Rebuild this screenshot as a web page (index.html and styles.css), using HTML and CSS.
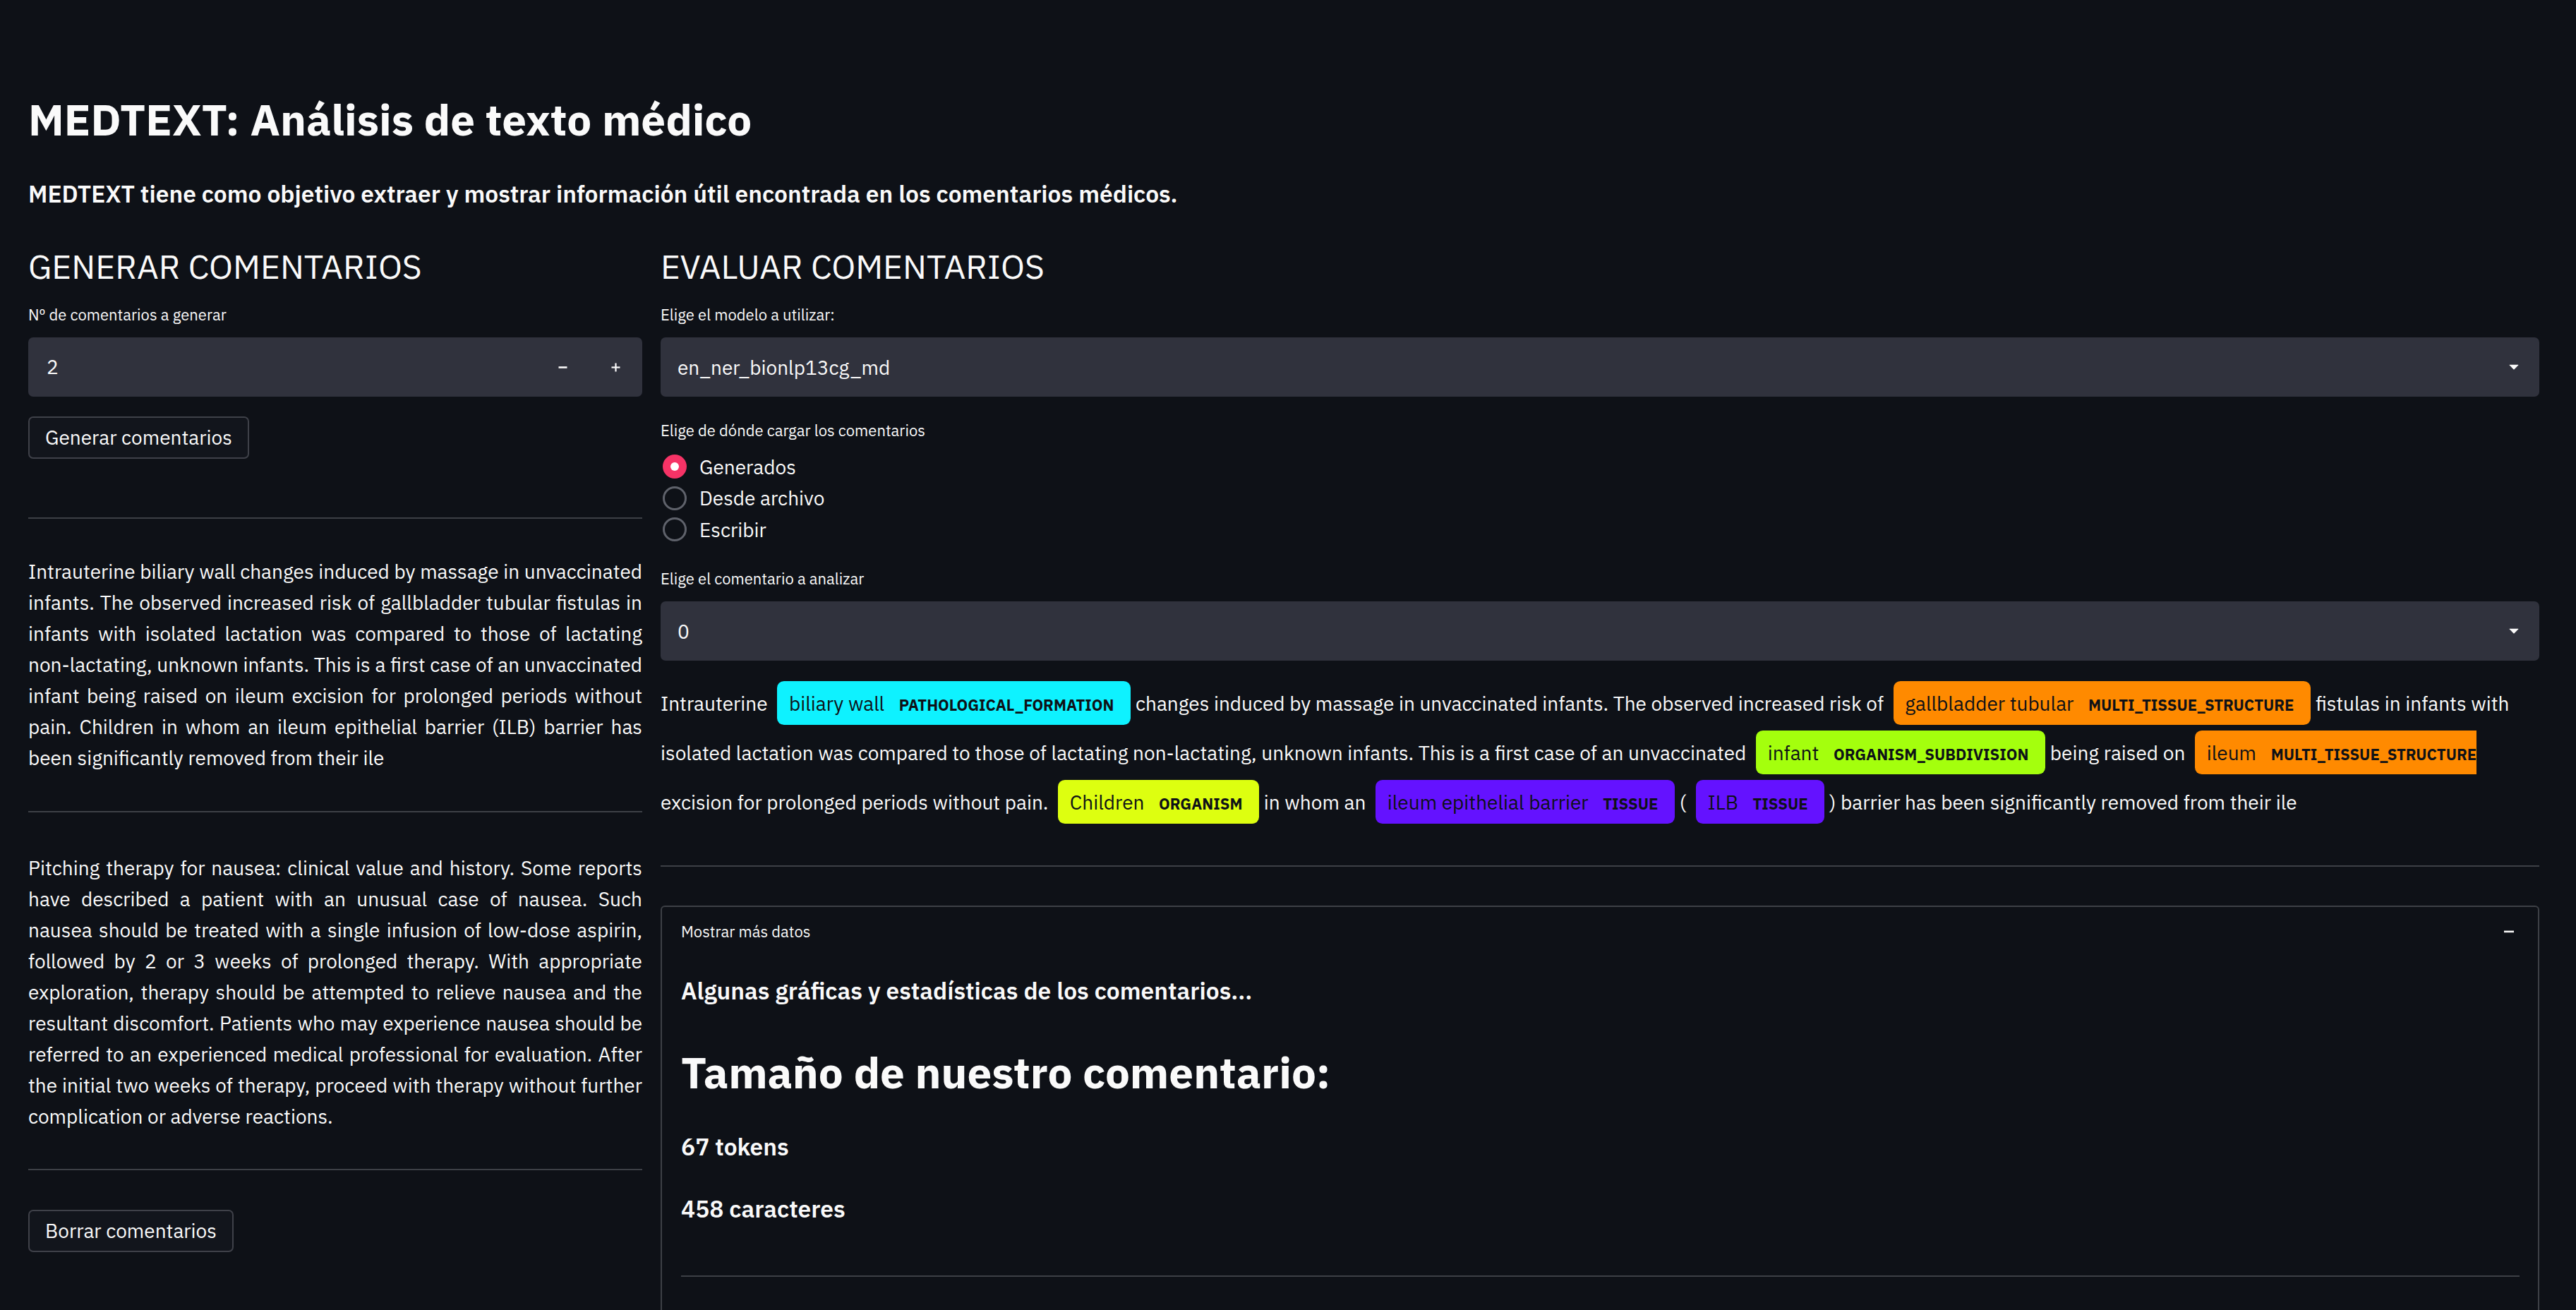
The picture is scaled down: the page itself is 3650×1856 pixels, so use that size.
FILE: index.html
```html
<!DOCTYPE html>
<html lang="es">
<head>
<meta charset="utf-8">
<title>MEDTEXT</title>
<link rel="stylesheet" href="styles.css">
</head>
<body>
<main class="app">
  <h1 class="title">MEDTEXT: Análisis de texto médico</h1>
  <p class="lead">MEDTEXT tiene como objetivo extraer y mostrar información útil encontrada en los comentarios médicos.</p>

  <div class="cols">
    <section class="col">
      <h2 class="col-title">GENERAR COMENTARIOS</h2>
      <label class="field-label">Nº de comentarios a generar</label>
      <div class="num-input">
        <span class="num-value">2</span>
        <span class="step"><svg width="13" height="13" viewBox="0 0 13 13"><rect x="0.5" y="5.2" width="12" height="2.6" fill="#fafafa"/></svg></span>
        <span class="step"><svg width="13" height="13" viewBox="0 0 13 13"><rect x="0.5" y="5.4" width="12" height="2.2" fill="#fafafa"/><rect x="5.4" y="0.5" width="2.2" height="12" fill="#fafafa"/></svg></span>
      </div>
      <button class="btn btn-gen">Generar comentarios</button>
      <hr class="sep sep-a">
      <p class="comment">Intrauterine biliary wall changes induced by massage in unvaccinated infants. The observed increased risk of gallbladder tubular fistulas in infants with isolated lactation was compared to those of lactating non-lactating, unknown infants. This is a first case of an unvaccinated infant being raised on ileum excision for prolonged periods without pain. Children in whom an ileum epithelial barrier (ILB) barrier has been significantly removed from their ile</p>
      <hr class="sep sep-b">
      <p class="comment comment-2">Pitching therapy for nausea: clinical value and history. Some reports have described a patient with an unusual case of nausea. Such nausea should be treated with a single infusion of low-dose aspirin, followed by 2 or 3 weeks of prolonged therapy. With appropriate exploration, therapy should be attempted to relieve nausea and the resultant discomfort. Patients who may experience nausea should be referred to an experienced medical professional for evaluation. After the initial two weeks of therapy, proceed with therapy without further complication or adverse reactions.</p>
      <hr class="sep sep-c">
      <button class="btn btn-del">Borrar comentarios</button>
    </section>

    <section class="col">
      <h2 class="col-title">EVALUAR COMENTARIOS</h2>
      <label class="field-label">Elige el modelo a utilizar:</label>
      <div class="select">
        <span class="sel-value">en_ner_bionlp13cg_md</span>
        <svg class="caret" width="14" height="8" viewBox="0 0 14 8"><path d="M1 0.8 H13 Q13.6 0.8 13.2 1.4 L7.6 7.2 Q7 7.8 6.4 7.2 L0.8 1.4 Q0.4 0.8 1 0.8 Z" fill="#fafafa"/></svg>
      </div>
      <label class="field-label fl-radio">Elige de dónde cargar los comentarios</label>
      <div class="radios">
        <div class="radio"><span class="dot dot-on"></span><span>Generados</span></div>
        <div class="radio"><span class="dot"></span><span>Desde archivo</span></div>
        <div class="radio"><span class="dot"></span><span>Escribir</span></div>
      </div>
      <label class="field-label fl-comment">Elige el comentario a analizar</label>
      <div class="select sel-2">
        <span class="sel-value">0</span>
        <svg class="caret" width="14" height="8" viewBox="0 0 14 8"><path d="M1 0.8 H13 Q13.6 0.8 13.2 1.4 L7.6 7.2 Q7 7.8 6.4 7.2 L0.8 1.4 Q0.4 0.8 1 0.8 Z" fill="#fafafa"/></svg>
      </div>

      <div class="entities">Intrauterine <mark class="ent e-path">biliary wall <span class="lbl">PATHOLOGICAL_FORMATION</span> </mark> changes induced by massage in unvaccinated infants. The observed increased risk of <mark class="ent e-multi">gallbladder tubular <span class="lbl">MULTI_TISSUE_STRUCTURE</span> </mark> fistulas in infants with<br>isolated lactation was compared to those of lactating non-lactating, unknown infants. This is a first case of an unvaccinated <mark class="ent e-sub">infant <span class="lbl">ORGANISM_SUBDIVISION</span> </mark> being raised on <mark class="ent e-multi ent-cut">ileum <span class="lbl">MULTI_TISSUE_STRUCTURE</span></mark><br>excision for prolonged periods without pain. <mark class="ent e-org">Children <span class="lbl">ORGANISM</span> </mark> in whom an <mark class="ent e-tis">ileum epithelial barrier <span class="lbl">TISSUE</span> </mark> ( <mark class="ent e-tis">ILB <span class="lbl">TISSUE</span> </mark>) barrier has been significantly removed from their ile</div>

      <hr class="sep sep-r">

      <div class="expander">
        <div class="exp-head">
          <span>Mostrar más datos</span>
          <svg width="14" height="4" viewBox="0 0 14 4"><rect x="0" y="0.6" width="14" height="2.6" fill="#fafafa"/></svg>
        </div>
        <div class="exp-body">
          <h5 class="stat-intro">Algunas gráficas y estadísticas de los comentarios...</h5>
          <h2 class="stat-title">Tamaño de nuestro comentario:</h2>
          <h5 class="stat">67 tokens</h5>
          <h5 class="stat stat-2">458 caracteres</h5>
          <hr class="sep sep-exp">
        </div>
      </div>
    </section>
  </div>
</main>
</body>
</html>
```
FILE: styles.css
```css
html, body {
  margin: 0;
  padding: 0;
  background: #0e1117;
}

body {
  color: #fafafa;
  font-family: "IBM Plex Sans", "Source Sans 3", Lato, sans-serif;
  font-size: 28px;
  overflow: hidden;
}

.app {
  padding: 132px 52px 0 40px;
  height: 1856px;
  box-sizing: border-box;
}

.title {
  margin: 0;
  font-size: 62px;
  line-height: 74px;
  font-weight: 700;
}

.lead {
  margin: 42px 0 0;
  font-size: 33.6px;
  line-height: 54px;
  font-weight: 600;
}

.cols {
  margin-top: 46px;
  display: grid;
  grid-template-columns: 870px 1fr;
  column-gap: 26px;
  align-items: start;
}

.col {
  display: flex;
  flex-direction: column;
  min-width: 0;
}

.col-title {
  margin: 0;
  font-size: 48px;
  line-height: 58px;
  font-weight: 400;
}

.field-label {
  display: block;
  margin-top: 24px;
  font-size: 22px;
  line-height: 32px;
}

.num-input {
  margin-top: 16px;
  height: 84px;
  background: #30323d;
  border-radius: 7px;
  display: flex;
  align-items: center;
}

.num-value {
  flex: 1;
  padding-left: 26px;
  line-height: 84px;
}

.step {
  width: 75px;
  height: 84px;
  display: flex;
  align-items: center;
  justify-content: center;
}

.btn {
  align-self: flex-start;
  height: 60px;
  padding: 0 22px;
  box-sizing: border-box;
  background: #12151c;
  color: #fafafa;
  border: 2px solid #3f4149;
  border-radius: 7px;
  font-family: inherit;
  font-size: 28px;
  line-height: 1;
  display: inline-flex;
  align-items: center;
}

.btn-gen {
  margin-top: 28px;
}

.sep {
  margin: 0;
  border: 0;
  height: 2px;
  background: #3d4046;
}

.sep-a { margin-top: 83px; }
.sep-b { margin-top: 53.5px; }
.sep-c { margin-top: 52.5px; }

.comment {
  margin: 52.5px 0 0;
  font-size: 28px;
  line-height: 44px;
  text-align: justify;
}

.comment-2 {
  margin-top: 56.5px;
}

.btn-del {
  margin-top: 56px;
}

.select {
  margin-top: 16px;
  height: 84px;
  background: #30323d;
  border-radius: 7px;
  display: flex;
  align-items: center;
  justify-content: space-between;
  padding: 0 29px 0 24px;
}

.caret {
  display: block;
}

.fl-radio {
  margin-top: 32px;
}

.radios {
  margin-top: 12.75px;
  display: flex;
  flex-direction: column;
  padding-left: 3px;
}

.radio {
  height: 44.5px;
  display: flex;
  align-items: center;
  gap: 18px;
  font-size: 28px;
}

.dot {
  width: 34px;
  height: 34px;
  box-sizing: border-box;
  border-radius: 50%;
  border: 3px solid #5f626b;
  flex: none;
}

.dot-on {
  border: 0;
  background: #f63366;
  position: relative;
}

.dot-on::after {
  content: "";
  position: absolute;
  left: 11px;
  top: 11px;
  width: 12px;
  height: 12px;
  border-radius: 50%;
  background: #ffffff;
}

.fl-comment {
  margin-top: 31.75px;
}

.entities {
  margin-top: 25.5px;
  line-height: 70px;
  font-size: 28px;
  white-space: normal;
}

.ent {
  padding: 0.45em 0.6em;
  margin: 0 0.25em;
  line-height: 1;
  border-radius: 0.35em;
  color: #0e1117;
}

.lbl {
  font-size: 22px;
  font-weight: 700;
  line-height: 1;
  vertical-align: middle;
  margin-left: 14px;
}

.ent-cut {
  padding-right: 0;
  margin-right: 0;
  border-top-right-radius: 0;
  border-bottom-right-radius: 0;
}

.e-path { background: #0ef2ff; }
.e-multi { background: #ff8a00; }
.e-sub { background: #a4ff0d; }
.e-org { background: #ddff10; }
.e-tis { background: #6412ff; }

.sep-r {
  margin-top: 54.5px;
}

.expander {
  margin-top: 54.5px;
  border: 2px solid #3d4046;
  border-radius: 6px;
  padding-bottom: 300px;
}

.exp-head {
  display: flex;
  align-items: center;
  justify-content: space-between;
  padding: 16px 34px 14px 27px;
  font-size: 22px;
  line-height: 38px;
}

.exp-head svg {
  display: block;
}

.exp-body {
  padding: 0 26px 0 27px;
}

.stat-intro,
.stat {
  margin: 0;
  font-size: 33.6px;
  line-height: 38px;
  font-weight: 600;
}

.stat-intro {
  margin-top: 32px;
}

.stat-title {
  margin: 59.75px 0 0;
  font-size: 62px;
  line-height: 74px;
  font-weight: 700;
}

.stat {
  margin-top: 49.25px;
}

.stat-2 {
  margin-top: 50px;
}

.sep-exp {
  margin-top: 75px;
}
```
